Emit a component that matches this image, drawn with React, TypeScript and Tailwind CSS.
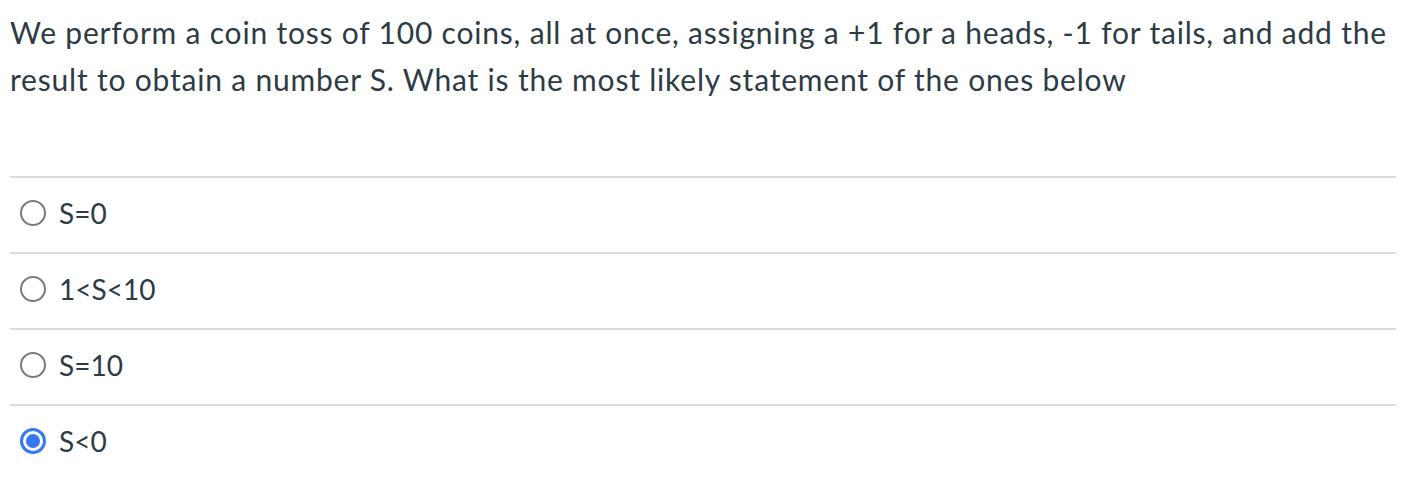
import React from "react";

const options = [
  { label: "S=0", checked: false },
  { label: "1<S<10", checked: false },
  { label: "S=10", checked: false },
  { label: "S<0", checked: true },
];

function Radio({ checked }: { checked: boolean }) {
  if (checked) {
    return (
      <span className="flex h-[26px] w-[26px] shrink-0 items-center justify-center rounded-full border-[3px] border-[#3478f6] bg-white">
        <span className="h-[14px] w-[14px] rounded-full bg-[#3478f6]" />
      </span>
    );
  }
  return <span className="h-[26px] w-[26px] shrink-0 rounded-full border-2 border-[#7a7a7a] bg-white" />;
}

export default function App() {
  return (
    <div
      className="min-h-[482px] w-[1406px] bg-white pl-[10px] pr-[10px] text-[#2d3b45]"
      style={{ fontFamily: "Lato, 'Open Sans', sans-serif" }}
    >
      <p className="pt-[9px] text-[30px] leading-[47px] tracking-[0.8px]">
        We perform a coin toss of 100 coins, all at once, assigning a +1 for a heads, -1 for tails, and add the
        result to obtain a number S. What is the most likely statement of the ones below
      </p>
      <div className="mt-[73px]">
        {options.map((o) => (
          <div key={o.label} className="flex h-[76px] items-center gap-[13px] border-t-2 border-[#dcdcdc] pb-[4px] pl-[10px]">
            <Radio checked={o.checked} />
            <span className="text-[28px] leading-none">{o.label}</span>
          </div>
        ))}
      </div>
    </div>
  );
}
